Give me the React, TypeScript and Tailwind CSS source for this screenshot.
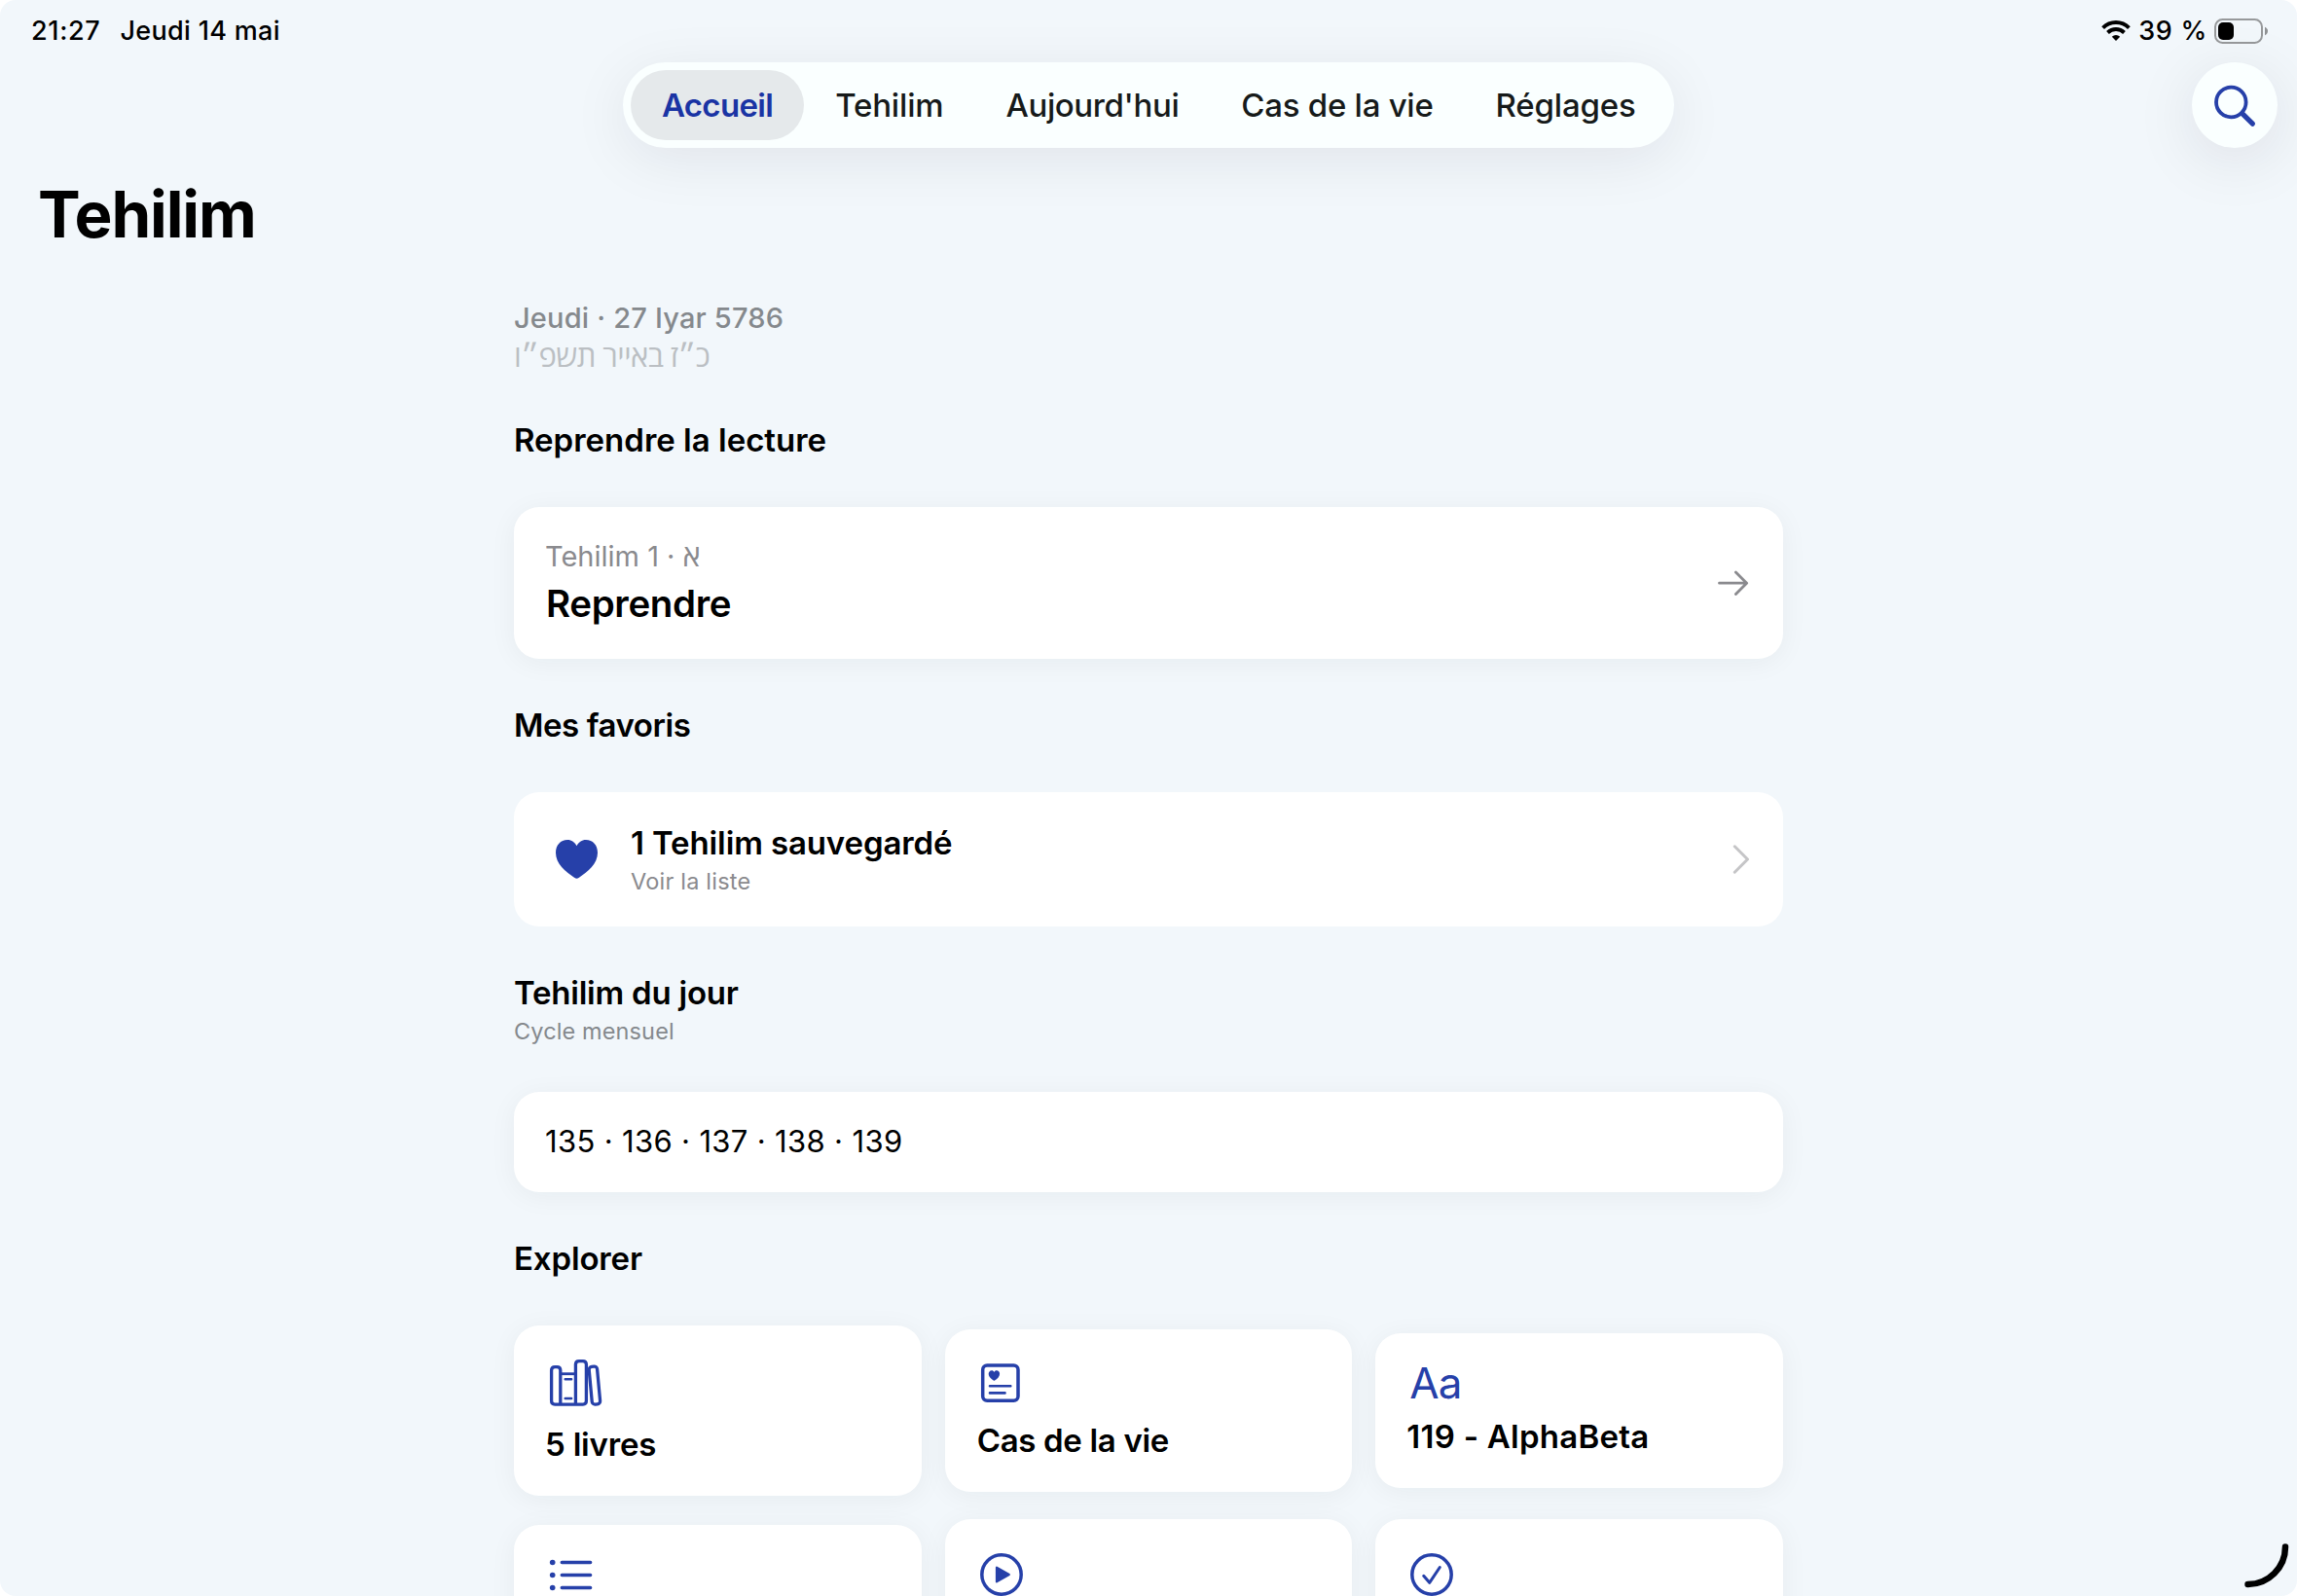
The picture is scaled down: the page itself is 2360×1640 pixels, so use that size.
import React from 'react';

const BLUE = '#2640a9';

const tabs = [
    { label: 'Accueil', className: 'bg-[#e5e9eb] font-semibold text-[#1a34a4] tracking-[-0.69px]' },
    { label: 'Tehilim', className: 'tracking-[-0.16px]' },
    { label: "Aujourd'hui", className: 'tracking-[-0.4px]' },
    { label: 'Cas de la vie', className: 'tracking-[-0.26px]' },
    { label: 'Réglages', className: 'tracking-[-0.18px]' },
];

const heartPath = 'M21.5 6.2C19.8 2.6 16.2 0 12 0 5 0 0 5.4 0 13.2 0 24.5 10 32.5 19 38.7c1 .7 1.8 1.1 2.5 1.1s1.5-.4 2.5-1.1c9-6.2 19-14.2 19-25.5C43 5.4 38 0 31 0c-4.2 0-7.8 2.6-9.5 6.2z';

const WifiIcon = () => (
    <svg width="30" height="22" viewBox="0 0 30 22" fill="none" stroke="#000" strokeWidth="3.9">
        <path d="M1.6 7.6a19 19 0 0 1 26.8 0" />
        <path d="M6.5 12.5a12.2 12.2 0 0 1 17 0" />
        <path d="M15 21l-4.2-4.3a6 6 0 0 1 8.4 0z" fill="#000" stroke="none" />
    </svg>
);

const BatteryIcon = () => (
    <svg width="56" height="26" viewBox="0 0 56 26">
        <rect x="1" y="1" width="48" height="24" rx="7.5" fill="none" stroke="#97999b" strokeWidth="2" />
        <rect x="4" y="4" width="16" height="18" rx="5" fill="#000" />
        <path d="M52 8.8c1.8.7 3 2.3 3 4.2s-1.2 3.5-3 4.2z" fill="#8f9193" />
    </svg>
);

const SearchIcon = () => (
    <svg width="88" height="88" viewBox="0 0 88 88" fill="none" stroke={BLUE} strokeLinecap="round">
        <circle cx="40.3" cy="41" r="15.3" strokeWidth="3.8" />
        <path d="M52 52.8l10.4 10.4" strokeWidth="5.2" />
    </svg>
);

const ArrowIcon = () => (
    <svg width="32" height="26" viewBox="0 0 32 26" fill="none" stroke="#8a8a8e" strokeWidth="2.8" strokeLinecap="round" strokeLinejoin="round">
        <path d="M1.5 13.2h28M18.4 1.9l11.2 11.3-11.2 11.3" />
    </svg>
);

const ChevronIcon = () => (
    <svg width="18" height="30" viewBox="0 0 18 30" fill="none" stroke="#c5c5c7" strokeWidth="3" strokeLinecap="round" strokeLinejoin="round">
        <path d="M2.3 1.8l13.2 13.2L2.3 28.2" />
    </svg>
);

const HeartIcon = () => (
    <svg width="43" height="40" viewBox="0 0 43 40" fill={BLUE}>
        <path d={heartPath} />
    </svg>
);

const BooksIcon = () => (
    <svg width="64" height="54" viewBox="0 0 64 54" fill="none" stroke={BLUE} strokeWidth="3.3" strokeLinejoin="round">
        <path d="M15.8 49.1V14.1q0-3.5-3.5-3.5h-2.2q-3.5 0-3.5 3.5v31.5q0 3.5 3.5 3.5h28.8q3.5 0 3.5-3.5V8.1q0-3.5-3.5-3.5h-4q-3.5 0-3.5 3.5v41" />
        <path d="M15.8 17.7h15.6" strokeWidth="2.8" />
        <path d="M20.7 23.3h6.4M20.7 43h6.4" strokeWidth="2.5" strokeLinecap="round" />
        <rect x="-4.2" y="-19.4" width="8.4" height="38.8" rx="3" transform="translate(50.9 29.6) rotate(-5.3)" />
    </svg>
);

const CaseIcon = () => (
    <svg width="50" height="46" viewBox="0 0 50 46" fill="none" stroke={BLUE} strokeLinecap="round">
        <rect x="6.7" y="5" width="36.3" height="36.3" rx="4.5" strokeWidth="3.5" />
        <path d="M14 26.3h21.3M14 33.4h15.5" strokeWidth="2.6" />
        <path d={heartPath} transform="translate(12.7 10.3) scale(.265)" fill={BLUE} stroke="none" />
    </svg>
);

const ListIcon = () => (
    <svg width="50" height="42" viewBox="0 0 50 42" fill="none" stroke={BLUE} strokeWidth="3.5" strokeLinecap="round">
        <path d="M17.3 6.5h29.3M17.3 19.5h29.3M17.3 32.5h29.3" />
        <g fill={BLUE} stroke="none">
            <circle cx="7.7" cy="6.5" r="2.8" />
            <circle cx="7.7" cy="19.5" r="2.8" />
            <circle cx="7.7" cy="32.5" r="2.8" />
        </g>
    </svg>
);

const PlayIcon = () => (
    <svg width="50" height="50" viewBox="0 0 50 50" fill="none" stroke={BLUE}>
        <circle cx="26" cy="25" r="20.2" strokeWidth="3.5" />
        <path d="M21 17.7v14.7L33.8 25z" fill={BLUE} strokeWidth="2.2" strokeLinejoin="round" />
    </svg>
);

const CheckIcon = () => (
    <svg width="50" height="50" viewBox="0 0 50 50" fill="none" stroke={BLUE} strokeLinecap="round" strokeLinejoin="round">
        <circle cx="26" cy="25" r="20.2" strokeWidth="3.5" />
        <path d="M17.7 26.3l6 7L34.3 17.5" strokeWidth="3" />
    </svg>
);

const SectionTitle: React.FC<{ className: string; children: string }> = ({ className, children }) => (
    <h2 className={`text-[33px] leading-10 font-semibold ${className}`}>{children}</h2>
);

const Card: React.FC<{ className: string; children: React.ReactNode; flat?: boolean }> = ({ className, children, flat }) => (
    <div className={`rounded-[26px] bg-white px-8 ${flat ? '' : 'shadow-[0_4px_28px_rgba(20,30,30,0.05)]'} ${className}`}>
        {children}
    </div>
);

const App: React.FC = () => {
    return (
        <div className="h-[1640px] w-[2360px] bg-white">
            <div className="relative h-full overflow-hidden rounded-2xl bg-[#f2f7fb] text-black [font-family:Inter,'Open_Sans',sans-serif] whitespace-nowrap">
                {/* Status bar */}
                <div className="flex h-16 items-center justify-between pr-[29px] pl-8 text-[27px] font-medium">
                    <div className="flex gap-5 pt-px">
                        <span className="tracking-[0.66px]">21:27</span>
                        <span className="tracking-[0.32px]">Jeudi 14 mai</span>
                    </div>
                    <div className="flex items-center">
                        <WifiIcon />
                        <span className="mr-[7px] ml-2 pt-px tracking-[0.72px]">39 %</span>
                        <BatteryIcon />
                    </div>
                </div>

                {/* Tab bar */}
                <header className="flex items-center justify-between px-5">
                    <div className="w-[88px]" />
                    <nav className="flex h-[88px] w-[1080px] rounded-full bg-[#faffff] p-2 text-[33px] font-medium text-[#161a1a] shadow-[0_12px_60px_rgba(30,15,40,0.08)]">
                        {tabs.map((tab) => (
                            <button key={tab.label} className={`rounded-full px-8 pt-px ${tab.className}`}>
                                {tab.label}
                            </button>
                        ))}
                    </nav>
                    <button className="h-[88px] w-[88px] rounded-full bg-[#faffff] shadow-[0_12px_64px_rgba(30,15,40,0.1)]">
                        <SearchIcon />
                    </button>
                </header>

                <h1 className="pt-px pl-[39px] text-[65.5px] leading-[135px] font-bold tracking-[-1.11px]">Tehilim</h1>

                <main className="mx-auto w-[1304px] pt-5">
                    <p className="text-[29px] leading-[38px] font-medium tracking-[0.19px] text-[#85898d]">Jeudi · 27 Iyar 5786</p>
                    <p className="[font-family:'Open_Sans',sans-serif] text-[31px] leading-[38px] tracking-[-0.55px] text-[#bbbfc3]">
                        <bdi>כ״ז באייר תשפ״ו</bdi>
                    </p>

                    <SectionTitle className="mt-12">Reprendre la lecture</SectionTitle>
                    <Card className="mt-[49px] flex h-[156px] items-center justify-between pr-[35px]">
                        <div className="pb-[2px]">
                            <p className="text-[29px] leading-10 text-[#8a8a8e]">
                                Tehilim 1 · <span className="[font-family:'Open_Sans',sans-serif] text-[31px] leading-none">א</span>
                            </p>
                            <p className="mt-1 pl-px text-[38.5px] leading-[48px] font-semibold tracking-[-0.35px]">Reprendre</p>
                        </div>
                        <ArrowIcon />
                    </Card>

                    <SectionTitle className="mt-12 tracking-[-0.42px]">Mes favoris</SectionTitle>
                    <Card flat className="mt-[49px] flex h-[138px] items-center pr-[34px]">
                        <div className="flex w-[65px] justify-center">
                            <HeartIcon />
                        </div>
                        <div className="ml-[23px] flex-1">
                            <p className="text-[33px] leading-10 font-semibold tracking-[-0.12px]">1 Tehilim sauvegardé</p>
                            <p className="mt-[5px] text-[23.5px] leading-[30px] tracking-[0.2px] text-[#8a8a8e]">Voir la liste</p>
                        </div>
                        <ChevronIcon />
                    </Card>

                    <SectionTitle className="mt-12 tracking-[-0.22px]">Tehilim du jour</SectionTitle>
                    <p className="mt-[5px] text-[23.5px] leading-[30px] tracking-[0.12px] text-[#85898d]">Cycle mensuel</p>
                    <Card className="mt-[47px] flex h-[103px] items-center">
                        <p className="text-[31px] tracking-[0.34px]">135 · 136 · 137 · 138 · 139</p>
                    </Card>

                    <SectionTitle className="mt-12 tracking-[-0.15px]">Explorer</SectionTitle>
                    <div className="mt-[49px] grid grid-cols-3 items-center gap-6 text-[33px] leading-10 font-semibold">
                        <Card className="h-[175px] pt-8">
                            <BooksIcon />
                            <p className="mt-4 tracking-[-0.2px]">5 livres</p>
                        </Card>
                        <Card className="h-[167px] pt-8">
                            <CaseIcon />
                            <p className="mt-4 pl-px tracking-[-0.32px]">Cas de la vie</p>
                        </Card>
                        <Card className="h-[159px] pt-8">
                            <p className="pl-[3px] text-[44px] leading-[38px] font-normal tracking-[-1px] text-[#2640a9]">Aa</p>
                            <p className="mt-4 tracking-[0.25px]">119 - AlphaBeta</p>
                        </Card>
                        <Card className="h-[163px] pt-8">
                            <ListIcon />
                        </Card>
                        <Card className="h-[175px] pt-8">
                            <PlayIcon />
                        </Card>
                        <Card className="h-[175px] pt-8">
                            <CheckIcon />
                        </Card>
                    </div>
                </main>

                {/* Screen corner handle */}
                <svg className="absolute right-0 bottom-0" width="60" height="60" viewBox="0 0 60 60" fill="none">
                    <path d="M9.5 48A38.5 38.5 0 0 0 48 9.5" stroke="#000" strokeWidth="6.5" strokeLinecap="round" />
                </svg>
            </div>
        </div>
    );
};

export default App;
